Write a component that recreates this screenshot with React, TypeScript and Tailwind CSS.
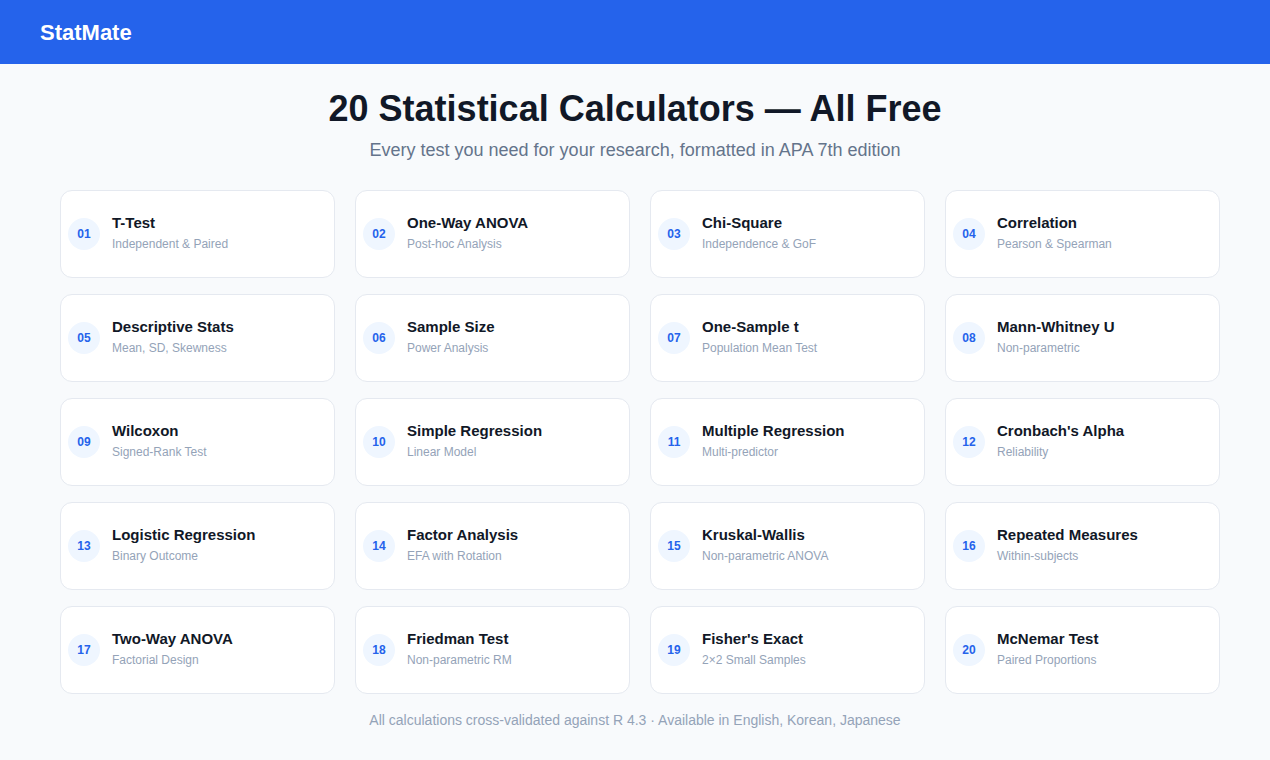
import React from 'react';

const CALCULATORS = [
  { name: 'T-Test', desc: 'Independent & Paired' },
  { name: 'One-Way ANOVA', desc: 'Post-hoc Analysis' },
  { name: 'Chi-Square', desc: 'Independence & GoF' },
  { name: 'Correlation', desc: 'Pearson & Spearman' },
  { name: 'Descriptive Stats', desc: 'Mean, SD, Skewness' },
  { name: 'Sample Size', desc: 'Power Analysis' },
  { name: 'One-Sample t', desc: 'Population Mean Test' },
  { name: 'Mann-Whitney U', desc: 'Non-parametric' },
  { name: 'Wilcoxon', desc: 'Signed-Rank Test' },
  { name: 'Simple Regression', desc: 'Linear Model' },
  { name: 'Multiple Regression', desc: 'Multi-predictor' },
  { name: "Cronbach's Alpha", desc: 'Reliability' },
  { name: 'Logistic Regression', desc: 'Binary Outcome' },
  { name: 'Factor Analysis', desc: 'EFA with Rotation' },
  { name: 'Kruskal-Wallis', desc: 'Non-parametric ANOVA' },
  { name: 'Repeated Measures', desc: 'Within-subjects' },
  { name: 'Two-Way ANOVA', desc: 'Factorial Design' },
  { name: 'Friedman Test', desc: 'Non-parametric RM' },
  { name: "Fisher's Exact", desc: '2×2 Small Samples' },
  { name: 'McNemar Test', desc: 'Paired Proportions' },
];

function CalculatorCard({ index, name, desc }: { index: number; name: string; desc: string }) {
  const num = String(index + 1).padStart(2, '0');
  return (
    <div className="flex h-[88px] items-center gap-3 rounded-xl border border-[#e5e9f0] bg-white pl-[7px] pr-4">
      <span className="flex h-8 w-8 shrink-0 items-center justify-center rounded-full bg-[#eff6ff] text-[12px] font-bold text-[#2563eb]">
        {num}
      </span>
      <div className="flex flex-col pb-[3px]">
        <span className="text-[15px] font-bold leading-5 text-[#111827]">{name}</span>
        <span className="mt-[3px] text-[12px] leading-4 text-[#94a3b8]">{desc}</span>
      </div>
    </div>
  );
}

export default function App() {
  return (
    <div className="min-h-screen bg-[#f8fafc] font-['Liberation_Sans',Arial,sans-serif]">
      <header className="flex h-16 items-center bg-[#2563eb] px-10">
        <span className="text-[22px] font-bold text-white">StatMate</span>
      </header>

      <main className="pb-6 pt-[25px]">
        <h1 className="text-center text-[36px] font-bold leading-10 text-[#111827]">
          20 Statistical Calculators — All Free
        </h1>
        <p className="mt-[7px] text-center text-[18px] leading-7 text-[#64748b]">
          Every test you need for your research, formatted in APA 7th edition
        </p>

        <div className="mt-[26px] pl-[60px] pr-[50px]">
          <div className="grid grid-cols-4 gap-x-5 gap-y-4">
            {CALCULATORS.map((calc, i) => (
              <CalculatorCard key={calc.name} index={i} name={calc.name} desc={calc.desc} />
            ))}
          </div>
        </div>

        <p className="mt-4 text-center text-[14px] leading-5 text-[#94a3b8]">
          All calculations cross-validated against R 4.3 · Available in English, Korean, Japanese
        </p>
      </main>
    </div>
  );
}
